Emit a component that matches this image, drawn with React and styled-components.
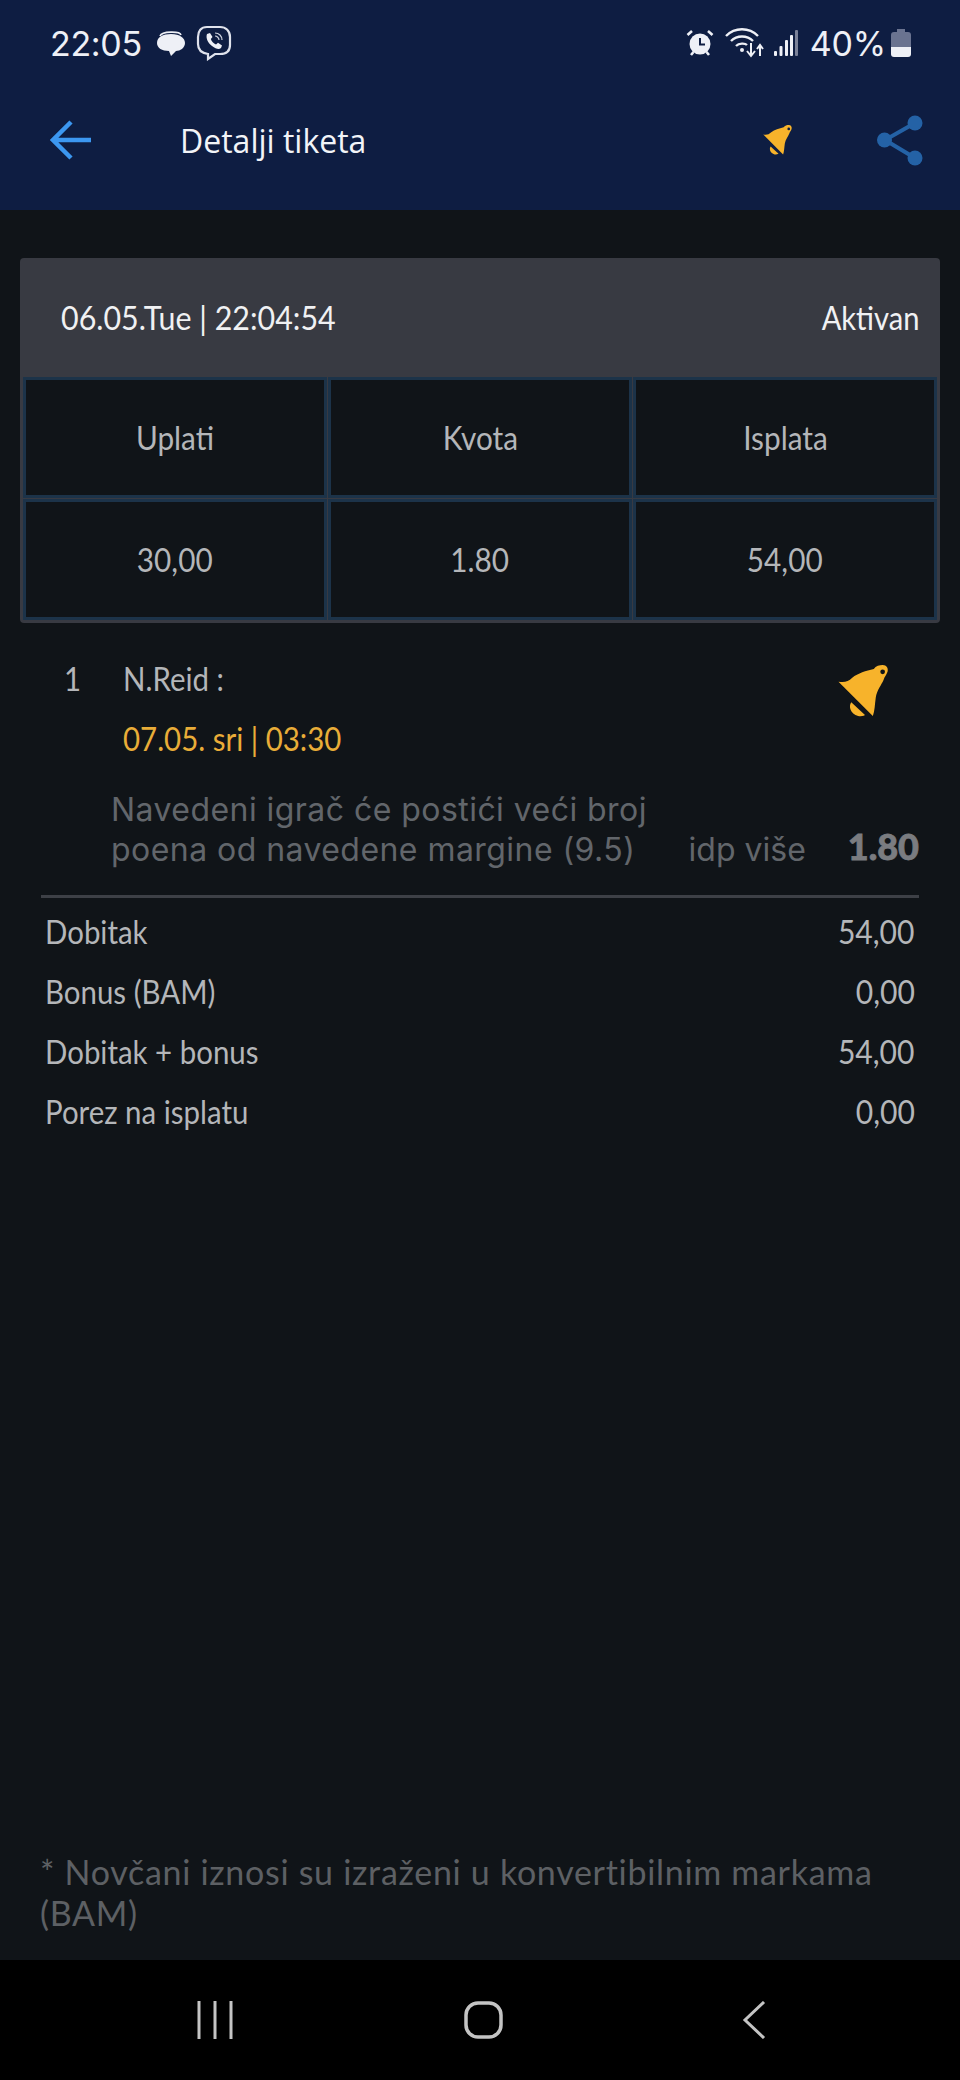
import styled, { createGlobalStyle } from "styled-components";

const GlobalStyle = createGlobalStyle`
  html, body {
    margin: 0;
    padding: 0;
    background: #101418;
  }
  * {
    box-sizing: border-box;
  }
`;

const summaryCells = ["Uplati", "Kvota", "Isplata", "30,00", "1.80", "54,00"];

const totals = [
  { label: "Dobitak", value: "54,00" },
  { label: "Bonus (BAM)", value: "0,00" },
  { label: "Dobitak + bonus", value: "54,00" },
  { label: "Porez na isplatu", value: "0,00" },
];

const BellIcon = ({ size, hole = "#101418" }) => (
  <svg width={size} height={size} viewBox="0 0 52 53">
    <path
      fill="#f7b32b"
      d="M0 17C6 18 10 17 14 13C20 8 28 6 36 4C38 1 42 0 45 0C49 0 51 3 50 7C49 10 47 12 46 15C44 20 39 26 38 33C37 40 37 47 35 52Z"
    />
    <path fill="#f7b32b" d="M13 38C10 42 12 50 20 52C24 53 27 51 27 51Z" />
    <circle cx="45" cy="7" r="2.4" fill={hole} />
  </svg>
);

const App = () => {
  return (
    <Page>
      <GlobalStyle />
      <Header>
        <StatusBar>
          <StatusGroup>
            <Clock>22:05</Clock>
            <Icon $gap={14} width="30" height="28" viewBox="0 0 30 28">
              <path d="M4 7C6 2 24 2 25 6" fill="none" stroke="#eef0f6" strokeWidth="1.6" />
              <path
                fill="#eef0f6"
                d="M1 14C1 8 7 5 15 5C24 5 29 9 29 14C29 19 24 22 20 22L15 27L13 22C6 22 1 19 1 14Z"
              />
            </Icon>
            <Icon $gap={10} width="36" height="36" viewBox="0 0 36 36">
              <path
                fill="none"
                stroke="#dfe2ec"
                strokeWidth="2.2"
                d="M11 2H24C30 2 34 6 34 12V20C34 26 30 29 24 29H19L12 34V29C5 28 2 25 2 19V12C2 6 5 2 11 2Z"
              />
              <path
                fill="#eef0f6"
                d="M11 9L14 8L16.500 12L14.800 14C15.600 16.500 17.500 18.500 20 19.500L22 17.800L26 20.500L25 23C23 25 20 24 16 21C12 18 9.500 13 11 9Z"
              />
              <path fill="none" stroke="#cfd3de" strokeWidth="1.2" d="M19 8C23 8 26 11 26 15M19 11C21 11 23 13 23 15" />
            </Icon>
          </StatusGroup>
          <StatusGroup>
            <Icon width="28" height="28" viewBox="0 0 28 28">
              <circle cx="14" cy="15" r="10.500" fill="#eef0f6" />
              <path d="M14 9V15.500H19" fill="none" stroke="#0e1d42" strokeWidth="2" />
              <path d="M1.500 6L6 2M26.500 6L22 2M5 26L7.500 23M23 26L20.500 23" stroke="#eef0f6" strokeWidth="2.6" />
            </Icon>
            <Icon $gap={11} width="40" height="30" viewBox="0 0 40 30">
              <g fill="none" stroke="#eef0f6" strokeWidth="2.4">
                <path d="M1 8C10 -1 24 -1 33 8" />
                <path d="M6 13C12 7 22 7 28 13" />
                <path d="M11 18C14 15 20 15 22 17" />
              </g>
              <circle cx="17" cy="22" r="2" fill="#eef0f6" />
              <path d="M26 15V27M22 23L26 28L30 23M35 28V18M32 21L35 17L38 21" fill="none" stroke="#eef0f6" strokeWidth="2" />
            </Icon>
            <Icon $gap={9} width="24" height="27" viewBox="0 0 24 27">
              <rect x="0" y="21" width="3" height="5" rx="1" fill="#eef0f6" />
              <rect x="5.500" y="16" width="3" height="10" rx="1" fill="#eef0f6" />
              <rect x="11" y="10" width="3" height="16" rx="1" fill="#eef0f6" />
              <rect x="16" y="5" width="3" height="21" rx="1" fill="#eef0f6" />
              <rect x="21" y="0" width="3" height="26" rx="1" fill="#7a8198" />
            </Icon>
            <Battery>40%</Battery>
            <Icon $gap={5} width="20" height="28" viewBox="0 0 20 28">
              <path fill="#6a7390" d="M6 0H14V3H17C19 3 20 4 20 6V18H0V6C0 4 1 3 3 3H6Z" />
              <path fill="#eef0f6" d="M0 18H20V25C20 27 19 28 17 28H3C1 28 0 27 0 25Z" />
            </Icon>
          </StatusGroup>
        </StatusBar>
        <Toolbar>
          <svg width="41" height="40" viewBox="0 0 41 40">
            <path d="M41 20H3M21 2L3 20L21 38" fill="none" stroke="#3c97f0" strokeWidth="4.500" />
          </svg>
          <Title>Detalji tiketa</Title>
          <ToolbarActions>
            <BellIcon size={30} hole="#0e1d42" />
            <Icon $gap={84} width="46" height="51" viewBox="0 0 46 51">
              <path d="M38 8L8 25L38 43" fill="none" stroke="#2462a6" strokeWidth="4" />
              <circle cx="38" cy="8" r="7.500" fill="#2462a6" />
              <circle cx="7.500" cy="25" r="7.500" fill="#2462a6" />
              <circle cx="38" cy="43" r="7.500" fill="#2462a6" />
            </Icon>
          </ToolbarActions>
        </Toolbar>
      </Header>

      <Content>
        <Card>
          <CardHead>
            <CardDate>06.05.Tue | 22:04:54</CardDate>
            <CardStatus>Aktivan</CardStatus>
          </CardHead>
          <Summary>
            {summaryCells.map(cell => (
              <SummaryCell key={cell}>
                <CenteredText>{cell}</CenteredText>
              </SummaryCell>
            ))}
          </Summary>
        </Card>

        <Bet>
          <BetTop>
            <BetIndex>1</BetIndex>
            <div>
              <BetName>N.Reid :</BetName>
              <BetTime>07.05. sri | 03:30</BetTime>
            </div>
            <BetBell>
              <BellIcon size={52} />
            </BetBell>
          </BetTop>
          <BetBottom>
            <BetText>
              Navedeni igrač će postići veći broj
              <br />
              poena od navedene margine (9.5)
            </BetText>
            <BetMarket>idp više</BetMarket>
            <BetOdds>1.80</BetOdds>
          </BetBottom>
        </Bet>

        <Totals>
          {totals.map(row => (
            <TotalRow key={row.label}>
              <TotalLabel>{row.label}</TotalLabel>
              <TotalValue>{row.value}</TotalValue>
            </TotalRow>
          ))}
        </Totals>

        <Footnote>
          <FootnoteText>
            * Novčani iznosi su izraženi u konvertibilnim markama
            <br />
            (BAM)
          </FootnoteText>
        </Footnote>
      </Content>

      <NavBar>
        <svg width="36" height="38" viewBox="0 0 36 38">
          <path d="M2 0V38M18 0V38M34 0V38" stroke="#c4c4c4" strokeWidth="3" />
        </svg>
        <Icon $gap={231} width="39" height="38" viewBox="0 0 39 38">
          <rect x="2" y="2" width="35" height="34" rx="12" fill="none" stroke="#c4c4c4" strokeWidth="3.500" />
        </Icon>
        <Icon $gap={239} width="24" height="38" viewBox="0 0 24 38">
          <path d="M22 1L3 19L22 37" fill="none" stroke="#c4c4c4" strokeWidth="3" />
        </Icon>
      </NavBar>
    </Page>
  )
}

const Page = styled.div`
  width: 960px;
  height: 2080px;
  display: flex;
  flex-direction: column;
  overflow: hidden;
  background: #101418;
  font-family: "Lato", "Open Sans", sans-serif;
`;

const Icon = styled.svg`
  flex-shrink: 0;
  margin-left: ${p => p.$gap || 0}px;
`;

const Header = styled.header`
  height: 210px;
  flex-shrink: 0;
  padding: 0 37px 0 50px;
  background: #0e1d42;
`;

const StatusBar = styled.div`
  height: 86px;
  padding: 0 12px 0 0;
  display: flex;
  align-items: center;
  justify-content: space-between;
`;

const StatusGroup = styled.div`
  display: flex;
  align-items: center;
`;

const Clock = styled.span`
  font-family: "Inter", sans-serif;
  font-size: 34px;
  letter-spacing: -0.3px;
  color: #eef0f6;
`;

const Battery = styled.span`
  margin-left: 12px;
  font-family: "Inter", sans-serif;
  font-size: 34px;
  letter-spacing: -0.2px;
  color: #eef0f6;
`;

const Toolbar = styled.div`
  height: 108px;
  display: flex;
  align-items: center;
`;

const Title = styled.h1`
  margin: 0 0 0 89px;
  font-family: "Open Sans", sans-serif;
  font-size: 32px;
  font-weight: 400;
  color: #f2f4f8;
`;

const ToolbarActions = styled.div`
  margin-left: auto;
  display: flex;
  align-items: center;
`;

const Content = styled.main`
  flex: 1;
  display: flex;
  flex-direction: column;
  padding: 48px 20px 0;
`;

const Card = styled.section`
  height: 365px;
  padding: 0 3px 3px;
  border-radius: 4px;
  background: #383a42;
`;

const CardHead = styled.div`
  height: 119px;
  padding: 0 18px 0 38px;
  display: flex;
  align-items: center;
  justify-content: space-between;
`;

const CardDate = styled.span`
  font-size: 32px;
  color: #f0f1f3;
  transform: scaleX(0.95);
  transform-origin: left center;
`;

const CardStatus = styled.span`
  font-size: 32px;
  color: #f0f1f3;
  transform: scaleX(0.91);
  transform-origin: right center;
`;

const Summary = styled.div`
  display: grid;
  grid-template-columns: repeat(3, 1fr);
  grid-auto-rows: 121px;
  gap: 1px;
`;

const SummaryCell = styled.div`
  display: flex;
  align-items: center;
  justify-content: center;
  border: 3px solid #1c3349;
  background: #101418;
`;

const CenteredText = styled.span`
  font-size: 32px;
  color: #b4b6b9;
  transform: scaleX(0.93);
`;

const Bet = styled.section`
  border-bottom: 3px solid #3d4046;
  margin: 0 21px 0 21px;
`;

const BetTop = styled.div`
  display: flex;
  padding-top: 26px;
`;

const BetIndex = styled.span`
  width: 82px;
  padding-left: 25px;
  font-size: 32px;
  line-height: 60px;
  color: #b4b6b9;
  transform: scaleX(0.92);
  transform-origin: left center;
`;

const BetName = styled.div`
  font-size: 32px;
  line-height: 60px;
  color: #b4b6b9;
  transform: scaleX(0.92);
  transform-origin: left center;
`;

const BetTime = styled.div`
  font-size: 32px;
  line-height: 60px;
  color: #e9ad38;
  transform: scaleX(0.92);
  transform-origin: left center;
`;

const BetBell = styled.div`
  margin-left: auto;
  margin-right: 29px;
  padding-top: 16px;
`;

const BetBottom = styled.div`
  display: flex;
  align-items: flex-end;
  padding: 21px 0 25px 70px;
`;

const BetText = styled.p`
  flex: 1;
  margin: 0;
  font-family: "Inter", sans-serif;
  font-size: 32px;
  letter-spacing: 0.45px;
  line-height: 40px;
  color: #62666b;
`;

const BetMarket = styled.span`
  font-family: "Inter", sans-serif;
  font-size: 32px;
  line-height: 40px;
  color: #62666b;
`;

const BetOdds = styled.span`
  margin-left: 42px;
  margin-bottom: 2px;
  font-family: "Lato", sans-serif;
  font-size: 36px;
  font-weight: 900;
  line-height: 44px;
  color: #7a7c80;
  -webkit-text-stroke: 0.8px #7a7c80;
`;

const Totals = styled.section`
  padding: 3px 25px 0;
`;

const TotalRow = styled.div`
  height: 60px;
  display: flex;
  align-items: center;
  justify-content: space-between;
`;

const TotalLabel = styled.span`
  font-size: 32px;
  color: #b4b6b9;
  transform: scaleX(0.92);
  transform-origin: left center;
`;

const TotalValue = styled.span`
  font-size: 32px;
  color: #b4b6b9;
  transform: scaleX(0.94);
  transform-origin: right center;
`;

const Footnote = styled.div`
  margin-top: auto;
  padding: 0 0 27px 20px;
`;

const FootnoteText = styled.p`
  margin: 0;
  font-size: 34px;
  letter-spacing: 0.7px;
  line-height: 41px;
  color: #5d6064;
  white-space: nowrap;
`;

const NavBar = styled.nav`
  height: 120px;
  flex-shrink: 0;
  padding: 0 0 0 197px;
  display: flex;
  align-items: center;
  background: #000;
`;

export default App;
